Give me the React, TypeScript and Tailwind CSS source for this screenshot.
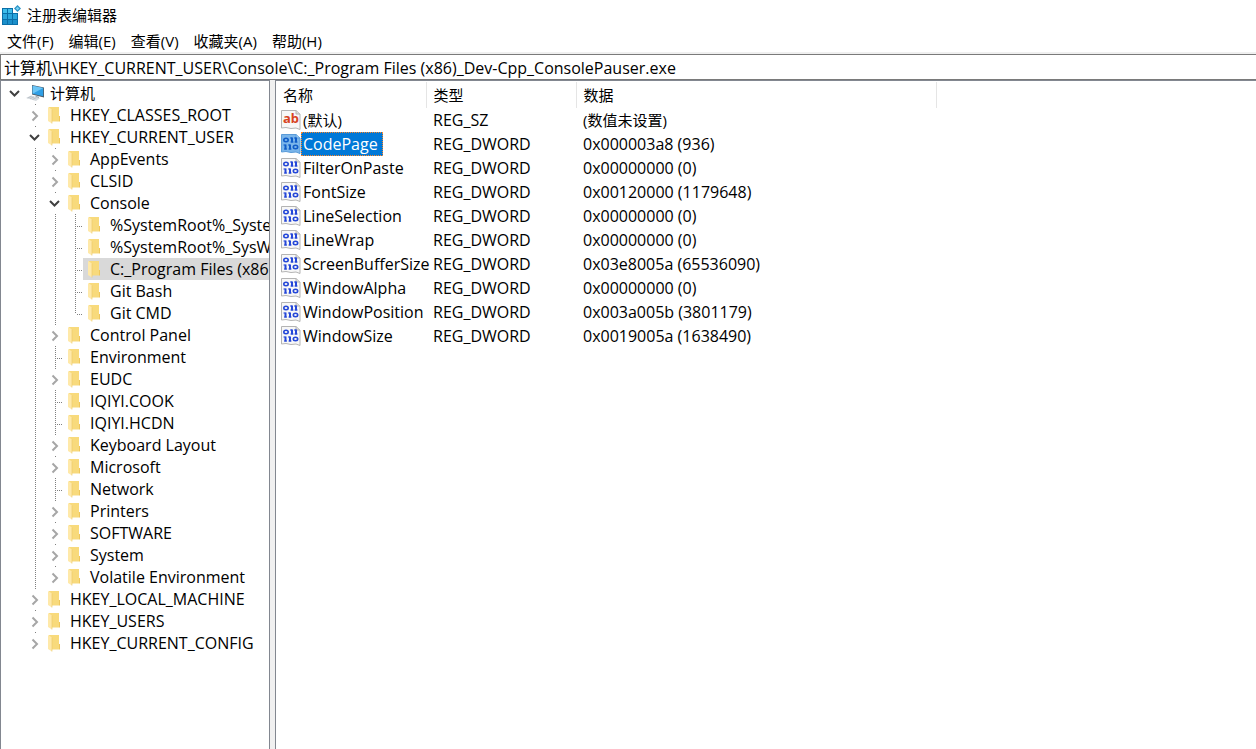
import { useState } from "react";
import clsx from "clsx";

type TreeNode = {
  label: string;
  depth: number;
  state?: "open" | "closed";
  // columns of the guide lines that keep running past this row
  rails?: number[];
  last?: boolean;
};

const hives: TreeNode[] = [
  { label: "HKEY_CLASSES_ROOT", depth: 1, state: "closed" },
  { label: "HKEY_CURRENT_USER", depth: 1, state: "open" },
  { label: "AppEvents", depth: 2, state: "closed", rails: [1] },
  { label: "CLSID", depth: 2, state: "closed", rails: [1] },
  { label: "Console", depth: 2, state: "open", rails: [1] },
  { label: "%SystemRoot%_System32_cmd.exe", depth: 3, rails: [1, 2] },
  { label: "%SystemRoot%_SysWOW64_cmd.exe", depth: 3, rails: [1, 2] },
  { label: "C:_Program Files (x86)_Dev-Cpp_ConsolePauser.exe", depth: 3, rails: [1, 2] },
  { label: "Git Bash", depth: 3, rails: [1, 2] },
  { label: "Git CMD", depth: 3, rails: [1, 2], last: true },
  { label: "Control Panel", depth: 2, state: "closed", rails: [1] },
  { label: "Environment", depth: 2, rails: [1] },
  { label: "EUDC", depth: 2, state: "closed", rails: [1] },
  { label: "IQIYI.COOK", depth: 2, rails: [1] },
  { label: "IQIYI.HCDN", depth: 2, rails: [1] },
  { label: "Keyboard Layout", depth: 2, state: "closed", rails: [1] },
  { label: "Microsoft", depth: 2, state: "closed", rails: [1] },
  { label: "Network", depth: 2, rails: [1] },
  { label: "Printers", depth: 2, state: "closed", rails: [1] },
  { label: "SOFTWARE", depth: 2, state: "closed", rails: [1] },
  { label: "System", depth: 2, state: "closed", rails: [1] },
  { label: "Volatile Environment", depth: 2, state: "closed", rails: [1], last: true },
  { label: "HKEY_LOCAL_MACHINE", depth: 1, state: "closed" },
  { label: "HKEY_USERS", depth: 1, state: "closed" },
  { label: "HKEY_CURRENT_CONFIG", depth: 1, state: "closed", last: true },
];

const values = [
  { name: "(默认)", type: "REG_SZ", data: "(数值未设置)" },
  { name: "CodePage", type: "REG_DWORD", data: "0x000003a8 (936)" },
  { name: "FilterOnPaste", type: "REG_DWORD", data: "0x00000000 (0)" },
  { name: "FontSize", type: "REG_DWORD", data: "0x00120000 (1179648)" },
  { name: "LineSelection", type: "REG_DWORD", data: "0x00000000 (0)" },
  { name: "LineWrap", type: "REG_DWORD", data: "0x00000000 (0)" },
  { name: "ScreenBufferSize", type: "REG_DWORD", data: "0x03e8005a (65536090)" },
  { name: "WindowAlpha", type: "REG_DWORD", data: "0x00000000 (0)" },
  { name: "WindowPosition", type: "REG_DWORD", data: "0x003a005b (3801179)" },
  { name: "WindowSize", type: "REG_DWORD", data: "0x0019005a (1638490)" },
];

const menus = ["文件(F)", "编辑(E)", "查看(V)", "收藏夹(A)", "帮助(H)"];

const verticalDots =
  "bg-[repeating-linear-gradient(to_bottom,#808080_0_1px,transparent_1px_2px)]";
const horizontalDots =
  "bg-[repeating-linear-gradient(to_right,#808080_0_1px,transparent_1px_2px)]";

// Chinese labels are set one step smaller than Latin key names
const labelSize = (text: string) => (/[\u4e00-\u9fff]/.test(text) ? "text-[15px]" : "text-[16px]");

function RegeditIcon() {
  return (
    <svg width="20" height="20" viewBox="0 0 20 20" aria-hidden="true">
      <path d="M0 3h11v5h5v12H0z" fill="#0b6fa8" />
      <path d="M1 4h4v4H1zM6 4h4v4H6z" fill="#3fbdea" />
      <path d="M1 9h4v5H1zM6 9h4v5H6zM11 9h4v5h-4z" fill="#2ba6dc" />
      <path d="M1 15h4v4H1zM6 15h4v4H6zM11 15h4v4h-4z" fill="#1c8fca" />
      <path d="M15.500 0l3.500 3.500-3.500 3.500L12 3.500z" fill="#2b93c6" />
      <path d="M15.500 1.700l1.800 1.800-1.800 1.800-1.800-1.800z" fill="#7ad2f2" />
    </svg>
  );
}

function ComputerIcon() {
  return (
    <svg width="20" height="18" viewBox="0 0 20 18" aria-hidden="true">
      <path d="M6 1l12 2.500v10L6 10.500z" fill="#4d5a66" />
      <path d="M6.600 1.700L17.200 4v8.300L6.600 9.800z" fill="#2f9fe6" />
      <path d="M6.600 1.700L17.200 4 6.600 9.800z" fill="#6cc5f5" />
      <path d="M10 12l3 .7v1.600l-4-1z" fill="#9aa4ad" />
      <path d="M0 14l5-2.500 9 2.800-4 2.700z" fill="#d5dadf" />
      <path d="M1.500 14l4-1.700M4 14.800l4-1.900M6.500 15.500l4-1.900" stroke="#a9b1b8" strokeWidth=".6" />
    </svg>
  );
}

function FolderIcon() {
  return (
    <svg width="12" height="18" viewBox="0 0 12 18" aria-hidden="true">
      <path d="M1 1h10v14.500H3z" fill="#f8da7c" />
      <path d="M11 10h1v5.500h-1z" fill="#efc75e" />
      <path d="M0 1l4 2.500v14L0 15z" fill="#ffe9a9" />
      <path d="M4 3.500v14" stroke="#eac765" strokeWidth=".6" />
    </svg>
  );
}

function Chevron({ open }: { open: boolean }) {
  return open ? (
    <svg width="12" height="14" viewBox="0 0 12 14" fill="none" aria-hidden="true">
      <path d="M1 5l4.500 4.500L10 5" stroke="#404040" strokeWidth="2" />
    </svg>
  ) : (
    <svg width="12" height="14" viewBox="0 0 12 14" fill="none" aria-hidden="true">
      <path d="M3.500 3.500L8 8l-4.500 4.500" stroke="#a6a6a6" strokeWidth="2" />
    </svg>
  );
}

function ValueIcon({ kind, selected }: { kind: string; selected: boolean }) {
  const ink = selected ? "#0f5cc8" : "#2447d8";
  const edge = selected ? "#5a9bd8" : "#b4b4b4";
  return (
    <svg width="20" height="20" viewBox="0 0 20 20" className="shrink-0" aria-hidden="true">
      <path
        d="M.5.5h14.500l4 3.500v15.500l-4-1.500-5 .5-5-1-4.500.5z"
        fill={selected ? "#7ab5ea" : "#f7f7f7"}
        stroke={edge}
      />
      <path d="M15 .5V4h4" fill={selected ? "#9ccaf2" : "#dcdcdc"} stroke={edge} />
      {kind === "REG_SZ" ? (
        <text x="2" y="13" fill="#d8431f" fontSize="13" fontWeight="700" fontFamily="Noto Sans, sans-serif">
          ab
        </text>
      ) : (
        <g stroke={ink} fill="none">
          <ellipse cx="5" cy="6" rx="2.200" ry="1.700" strokeWidth="1.600" />
          <ellipse cx="14.500" cy="13" rx="2.200" ry="1.700" strokeWidth="1.600" />
          <path d="M11 3.500v5M15 3.500v5M4.500 10.500v5M9 10.500v5" strokeWidth="2" />
          <path d="M9 4h2M13 4h2M9.500 8h3M13.500 8h3M2.500 11h2M7 11h2M3 15h3M7.500 15h3" strokeWidth="1" />
        </g>
      )}
    </svg>
  );
}

function TreeRow({ node, selected, onSelect }: { node: TreeNode; selected: boolean; onSelect: () => void }) {
  const { label, depth, state, rails = [], last } = node;
  return (
    <li className="flex h-[22px]">
      {Array.from({ length: depth }, (_, column) => (
        <span key={column} className="flex w-5 shrink-0 pl-[10px]">
          {rails.includes(column) && <span className={clsx("w-px", verticalDots)} />}
        </span>
      ))}
      {state ? (
        <span className="relative flex w-[18px] shrink-0 items-center pl-1">
          <span className={clsx("absolute top-0 left-[10px] h-px w-px", depth > 0 && "bg-[#808080]")} />
          <button aria-label={label} aria-expanded={state === "open"}>
            <Chevron open={state === "open"} />
          </button>
        </span>
      ) : (
        <span className="flex w-[18px] shrink-0 pl-[10px]">
          <span className={clsx("w-px", last ? "h-3" : "h-full", verticalDots)} />
          <span className={clsx("mt-3 ml-px h-px flex-1", horizontalDots)} />
        </span>
      )}
      <button
        onClick={onSelect}
        className={clsx(
          "flex min-w-0 flex-1 items-center overflow-hidden whitespace-nowrap",
          labelSize(label),
          selected && "bg-[#d9d9d9]"
        )}
      >
        <span className={clsx("w-[27px] shrink-0", depth > 0 ? "pl-[5px]" : "pl-[3px]")}>
          {depth > 0 ? <FolderIcon /> : <ComputerIcon />}
        </span>
        {label}
      </button>
    </li>
  );
}

export default function App() {
  const [key, setKey] = useState("C:_Program Files (x86)_Dev-Cpp_ConsolePauser.exe");
  const [value, setValue] = useState("CodePage");

  return (
    <div className="flex h-screen flex-col bg-white font-['Open_Sans','Noto_Sans_CJK_SC',sans-serif] text-[15px] leading-[22px] text-black">
      <header className="flex h-[29px] items-center gap-[5px] pl-[2px]">
        <RegeditIcon />
        <h1>注册表编辑器</h1>
      </header>
      <nav className="flex h-[23px] items-center gap-[15px] pl-[7px]">
        {menus.map((menu) => (
          <button key={menu}>{menu}</button>
        ))}
      </nav>
      <div className="border-t-2 border-[#f0f0f0]">
        <input
          aria-label="地址"
          className="block h-[26px] w-full border-y border-l border-[#7a7a7a] px-[3px] pb-px text-[16px] outline-none"
          defaultValue={"计算机\\HKEY_CURRENT_USER\\Console\\C:_Program Files (x86)_Dev-Cpp_ConsolePauser.exe"}
        />
      </div>

      <div className="flex min-h-0 flex-1 bg-[#f0f0f0]">
        <aside className="w-[270px] shrink-0 overflow-hidden border border-b-0 border-[#828790] bg-white pt-px pl-1">
          <ul>
            <TreeRow node={{ label: "计算机", depth: 0, state: "open" }} selected={false} onSelect={() => setKey("计算机")} />
            {hives.map((node) => (
              <TreeRow
                key={node.label}
                node={node}
                selected={node.label === key}
                onSelect={() => setKey(node.label)}
              />
            ))}
          </ul>
        </aside>

        <main className="ml-[5px] min-w-0 flex-1 overflow-hidden border-t border-l border-[#828790] bg-white pt-px">
          <table className="w-full table-fixed text-left whitespace-nowrap">
            <colgroup>
              <col className="w-[150px]" />
              <col className="w-[150px]" />
              <col className="w-[360px]" />
              <col />
            </colgroup>
            <thead>
              <tr className="h-[26px]">
                {["名称", "类型", "数据"].map((title) => (
                  <th key={title} scope="col" className="border-r border-[#e5e5e5] p-0 pl-[7px] font-normal">
                    {title}
                  </th>
                ))}
                <td />
              </tr>
            </thead>
            <tbody>
              {values.map(({ name, type, data }) => (
                <tr key={name} className="h-6">
                  <td className="p-0 pl-[5px]">
                    <button onClick={() => setValue(name)} className="flex h-6 items-center">
                      <ValueIcon kind={type} selected={name === value} />
                      <span
                        className={clsx(
                          "h-6 border pr-1 pl-px",
                          labelSize(name),
                          name === value
                            ? "border-dotted border-[#ff8728] bg-[#0078d7] text-white"
                            : "border-transparent"
                        )}
                      >
                        {name}
                      </span>
                    </button>
                  </td>
                  <td className="p-0 pl-[7px] text-[16px]">{type}</td>
                  <td className={clsx("p-0 pl-[7px]", labelSize(data))}>{data}</td>
                  <td />
                </tr>
              ))}
            </tbody>
          </table>
        </main>
      </div>
    </div>
  );
}
